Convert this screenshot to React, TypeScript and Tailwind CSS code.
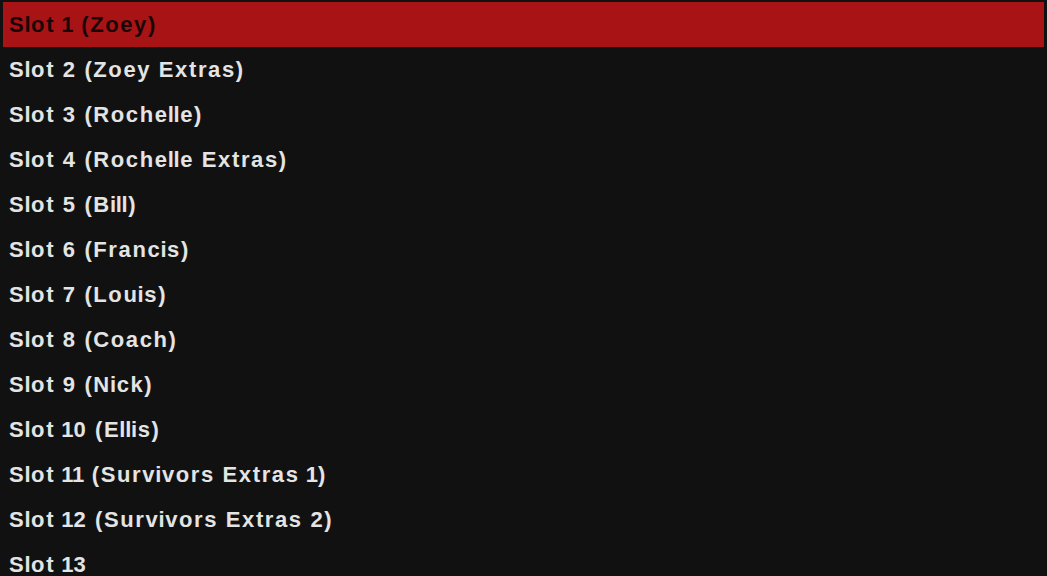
import React from "react";

const items = [
  "Slot 1 (Zoey)",
  "Slot 2 (Zoey Extras)",
  "Slot 3 (Rochelle)",
  "Slot 4 (Rochelle Extras)",
  "Slot 5 (Bill)",
  "Slot 6 (Francis)",
  "Slot 7 (Louis)",
  "Slot 8 (Coach)",
  "Slot 9 (Nick)",
  "Slot 10 (Ellis)",
  "Slot 11 (Survivors Extras 1)",
  "Slot 12 (Survivors Extras 2)",
  "Slot 13",
];

function Label({ text }: { text: string }) {
  return (
    <span className="whitespace-pre">
      {text.split("").map((c, i) => {
        if (c === "1")
          return (
            <span key={i} className="ml-[-1.6px] tracking-[0px]">
              {c}
            </span>
          );
        if (c === "i" || c === "l")
          return (
            <span key={i} className="ml-[-0.9px] tracking-[0.6px]">
              {c}
            </span>
          );
        return <span key={i}>{c}</span>;
      })}
    </span>
  );
}

export default function App() {
  return (
    <div
      className="w-[1047px] h-[576px] overflow-hidden bg-[#111111] px-[3px] pt-[2px]"
      style={{ fontFamily: '"Liberation Sans", Arial, sans-serif' }}
    >
      <ul className="flex flex-col">
        {items.map((t, i) => (
          <li
            key={t}
            className={
              "h-[45px] shrink-0 flex items-center pl-[6px] font-bold text-[22px] tracking-[1.6px] " +
              (i === 0 ? "bg-[#a81416] text-[#1a0606]" : "text-[#e4e4e4]")
            }
          >
            <Label text={t} />
          </li>
        ))}
      </ul>
    </div>
  );
}
